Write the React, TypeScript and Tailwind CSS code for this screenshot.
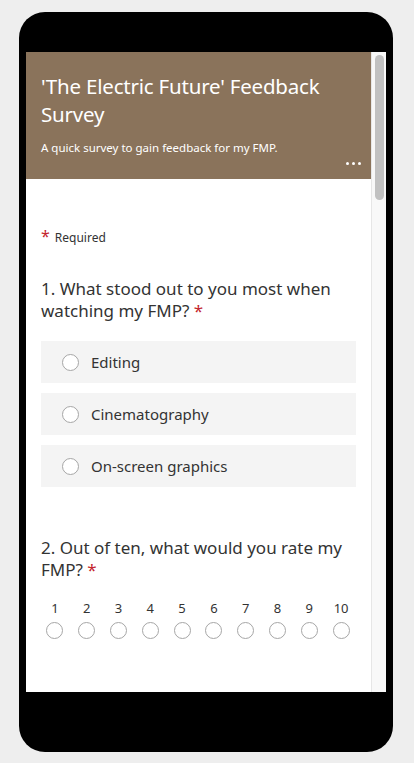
const options = ["Editing", "Cinematography", "On-screen graphics"];
const ratings = [1, 2, 3, 4, 5, 6, 7, 8, 9, 10];

function Radio() {
  return <span className="block w-[17px] h-[17px] rounded-full border border-[#a6a6a6] bg-white shrink-0" />;
}

export default function App() {
  return (
    <div className="min-h-[763px] bg-[#eeeeee] pt-3 px-[19px]" style={{ fontFamily: '"Noto Sans", "Open Sans", sans-serif' }}>
      <div className="w-[374px] h-[740px] bg-black rounded-[26px] pt-10 px-[7px]">
        <div className="h-[640px] flex bg-white overflow-hidden">
          <div className="w-[345px] shrink-0">
            {/* header */}
            <div className="h-[127px] bg-[#8a735b] px-[15px] pt-[20px] relative text-white">
              <h1 className="text-[20.5px] leading-[28px] tracking-[-0.2px]">'The Electric Future' Feedback Survey</h1>
              <p className="text-[11.5px] mt-[11px]">A quick survey to gain feedback for my FMP.</p>
              <div className="absolute right-[10px] bottom-[14px] flex gap-[3px]">
                <span className="w-[3px] h-[3px] rounded-full bg-white" />
                <span className="w-[3px] h-[3px] rounded-full bg-white" />
                <span className="w-[3px] h-[3px] rounded-full bg-white" />
              </div>
            </div>

            <div className="px-[15px] text-[#333333]">
              <div className="mt-[49px] flex items-center h-[18px]">
                <span className="text-[#c4262e] text-[16px] leading-[16px] mr-[5px] -mt-[3px]">*</span>
                <span className="text-[12px] leading-[16px] mt-[2px]">Required</span>
              </div>

              <p className="mt-[32px] text-[17px] leading-[22px]">
                1.&nbsp;What stood out to you most when watching my FMP? <span className="text-[#c4262e]">*</span>
              </p>

              <div className="mt-[19px] flex flex-col gap-[10px]">
                {options.map((o) => (
                  <div key={o} className="h-[42px] bg-[#f4f4f4] flex items-center pl-[21px] gap-[12px] text-[15px]">
                    <Radio />
                    <span>{o}</span>
                  </div>
                ))}
              </div>

              <p className="mt-[50px] text-[17px] leading-[22px]">
                2.&nbsp;Out of ten, what would you rate my FMP? <span className="text-[#c4262e]">*</span>
              </p>

              <div className="mt-[19px] -ml-[2px] grid grid-cols-10 w-[318px]">
                {ratings.map((r) => (
                  <div key={r} className="flex flex-col items-center gap-[6px]">
                    <span className="text-[13px] leading-[16px]">{r}</span>
                    <Radio />
                  </div>
                ))}
              </div>
            </div>
          </div>

          {/* scrollbar */}
          <div className="w-[15px] bg-[#f8f8f8] border-l border-[#e6e6e6] pt-[3px] flex justify-center">
            <div className="w-[9px] h-[145px] rounded-full bg-[#c1c1c1]" />
          </div>
        </div>
      </div>
    </div>
  );
}
